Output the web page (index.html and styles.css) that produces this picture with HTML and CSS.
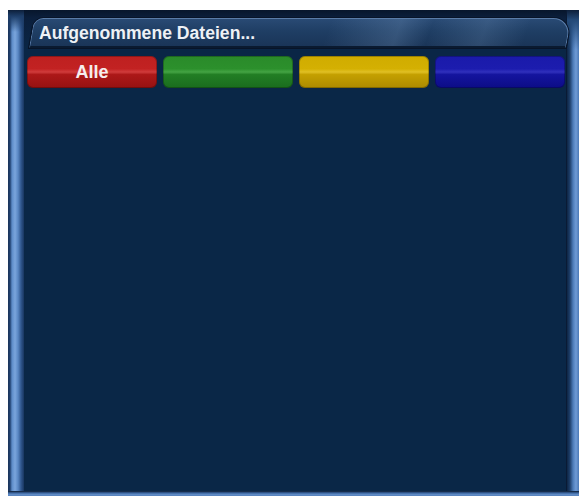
FILE: index.html
```html
<!DOCTYPE html>
<html lang="de">
<head>
<meta charset="utf-8">
<title>Aufgenommene Dateien</title>
<link rel="stylesheet" href="styles.css">
</head>
<body>
<div class="screen">
  <div class="rail rail-left"></div>
  <div class="center">
    <div class="titlebar">
      <span class="title">Aufgenommene Dateien...</span>
    </div>
    <div class="keys">
      <div class="key key-red">Alle</div>
      <div class="key key-green"></div>
      <div class="key key-yellow"></div>
      <div class="key key-blue"></div>
    </div>
    <div class="list"></div>
  </div>
  <div class="rail rail-right"></div>
  <div class="base"></div>
</div>
</body>
</html>
```

FILE: styles.css
```css
html, body {
  margin: 0;
  padding: 0;
  background: #ffffff;
}

body {
  padding: 10px 0 0 8px;
  font-family: "Liberation Sans", Arial, sans-serif;
}

.screen {
  width: 571px;
  height: 486px;
  display: grid;
  grid-template-columns: 16px 1fr 12px;
  grid-template-rows: 1fr 5px;
  background: #0a2646;
}

/* side rails of the frame */
.rail-left {
  grid-column: 1;
  grid-row: 1;
  background:
    linear-gradient(180deg, #0d1f3a 0px, #1d3d68 6px, rgba(0,0,0,0) 22px),
    linear-gradient(90deg, #1a3256 0px, #20406e 2px, #5d8cc8 4px, #7aa5dc 7px, #5a88c4 10px, #30578e 13px, #183660 16px);
}

.rail-right {
  grid-column: 3;
  grid-row: 1;
  background:
    linear-gradient(180deg, #0d1f3a 0px, #244a78 10px, rgba(0,0,0,0) 40px),
    linear-gradient(90deg, #0d2544 0px, #1f406c 3px, #4c7bb8 6px, #6f9bd6 9px, #4b78b4 12px);
}

.base {
  grid-column: 1 / 4;
  grid-row: 2;
  background: linear-gradient(180deg, #0b1a30 0px, #3c66a0 2px, #6a96d0 4px, #4a74ae 5px);
}

.center {
  grid-column: 2;
  grid-row: 1;
  display: flex;
  flex-direction: column;
  padding-top: 8px;
  background: linear-gradient(180deg, #07162c 0px, #0b1f3c 8px, #0a2646 40px);
  border-right: 1px solid #0a1a34;
}

/* caption bar with slanted left end */
.titlebar {
  position: relative;
  height: 30px;
  margin-left: 1px;
  display: flex;
  align-items: center;
}

.titlebar::before {
  content: "";
  position: absolute;
  left: 4px;
  right: 0;
  top: 0;
  bottom: 0;
  transform: skewX(-10deg);
  transform-origin: bottom left;
  border-radius: 9px 18px 0 0;
  border: 1px solid #5a7ca8;
  border-bottom: 2px solid #0a1a30;
  box-shadow: 0 0 0 1px #081428;
  background:
    linear-gradient(100deg, rgba(255,255,255,0) 55%, rgba(150,185,225,0.2) 68%, rgba(255,255,255,0) 74%, rgba(150,185,225,0.16) 84%, rgba(255,255,255,0) 92%),
    linear-gradient(180deg, #294a74 0%, #1f3e64 45%, #1a3558 100%);
}

.title {
  position: relative;
  margin-left: 14px;
  margin-top: 1px;
  color: #eef1f5;
  font-weight: bold;
  font-size: 17.6px;
}

/* coloured function keys */
.keys {
  display: grid;
  grid-template-columns: repeat(4, 1fr);
  gap: 6px;
  margin: 8px 1px 0 3px;
  height: 32px;
}

.key {
  border-radius: 6px;
  display: flex;
  align-items: center;
  justify-content: center;
  color: #f6eeee;
  font-weight: bold;
  font-size: 18px;
  box-shadow: inset 0 0 0 1px rgba(0,0,0,0.25);
}

.key-red {
  background: linear-gradient(180deg, #be2020 0%, #c22222 40%, #d03c3c 50%, #ac1818 58%, #961212 100%);
}

.key-green {
  background: linear-gradient(180deg, #2a8a2a 0%, #2c902c 40%, #44a444 50%, #227e24 58%, #1a6c1e 100%);
}

.key-yellow {
  background: linear-gradient(180deg, #d0ac00 0%, #d4b002 40%, #e0c024 50%, #c4a000 58%, #ac8a00 100%);
}

.key-blue {
  background: linear-gradient(180deg, #1a1aaa 0%, #1c1cae 40%, #3030bc 50%, #14149e 58%, #0c0c86 100%);
}

.list {
  flex: 1;
  margin-top: 2px;
  background: #0a2747;
}
```
